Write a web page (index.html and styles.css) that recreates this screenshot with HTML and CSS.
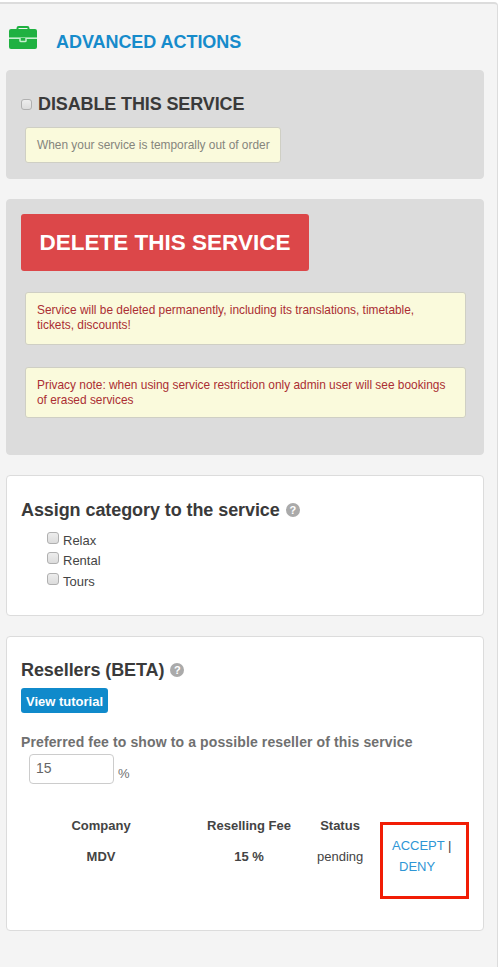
FILE: index.html
```html
<!DOCTYPE html>
<html lang="en">
  <head>
    <meta charset="UTF-8" />
    <meta name="viewport" content="width=device-width, initial-scale=1.0" />
    <title>Service | Advanced Actions</title>
    <link rel="stylesheet" href="styles.css">
  </head>
  <body>
    <div class="panel">
      <!-- Title -->
      <div class="panel-header">
        <svg class="briefcase" width="28" height="24" viewBox="0 0 28 24">
          <path d="M8.5 4V2.2Q8.5 1 9.7 1H18.3Q19.5 1 19.5 2.2V4" fill="none" stroke="#1fb141" stroke-width="2" />
          <rect x="0" y="3" width="28" height="20" rx="2" fill="#1fb141" />
          <path d="M0 12.2H28" stroke="#c5f0cf" stroke-width="1.6" />
          <path d="M11 12V14.7Q11 15.5 12 15.5H16Q17 15.5 17 14.7V12" fill="#1fb141" stroke="#c5f0cf" stroke-width="1.5" />
        </svg>
        <h1>ADVANCED ACTIONS</h1>
      </div>

      <!-- Disable service -->
      <div class="card card-grey disable-card">
        <label class="disable-label">
          <span class="checkbox"></span>
          <span class="disable-text">DISABLE THIS SERVICE</span>
        </label>
        <div class="note note-small">When your service is temporally out of order</div>
      </div>

      <!-- Delete service -->
      <div class="card card-grey delete-card">
        <button class="delete-btn">DELETE THIS SERVICE</button>
        <div class="note note-danger">Service will be deleted permanently, including its translations, timetable,<br>tickets, discounts!</div>
        <div class="note note-danger note-privacy">Privacy note: when using service restriction only admin user will see bookings<br>of erased services</div>
      </div>

      <!-- Categories -->
      <div class="card category-card">
        <h2><span>Assign category to the service</span> <span class="help">?</span></h2>
        <ul class="categories">
          <li><span class="checkbox"></span><span>Relax</span></li>
          <li><span class="checkbox"></span><span>Rental</span></li>
          <li><span class="checkbox"></span><span>Tours</span></li>
        </ul>
      </div>

      <!-- Resellers -->
      <div class="card reseller-card">
        <h2><span>Resellers (BETA)</span> <span class="help">?</span></h2>
        <a href="#" class="tutorial-btn">View tutorial</a>
        <p class="fee-label">Preferred fee to show to a possible reseller of this service</p>
        <div class="fee-row">
          <input type="text" class="fee-input" value="15">
          <span>%</span>
        </div>
        <div class="resellers">
          <div class="col col-company">
            <strong>Company</strong>
            <strong>MDV</strong>
          </div>
          <div class="col col-fee">
            <strong>Reselling Fee</strong>
            <strong>15 %</strong>
          </div>
          <div class="col col-status">
            <strong>Status</strong>
            <span>pending</span>
          </div>
          <div class="actions">
            <div><a href="#">ACCEPT</a> |</div>
            <a href="#" class="deny">DENY</a>
          </div>
        </div>
      </div>
    </div>
  </body>
</html>
```

FILE: styles.css
```css
* {
  box-sizing: border-box;
}

body {
  font-family: "Liberation Sans", Arial, sans-serif;
  font-size: 13px;
  margin: 0;
  padding: 2px 0 0;
  color: #444;
  background-color: #fff;
}

a {
  color: #2f96d5;
  text-decoration: none;
}

.panel {
  width: 498px;
  height: 965px;
  padding: 0 12px 0 6px;
  background-color: #f4f4f4;
  border-top: 2px solid #dcdcdc;
  border-right: 1px solid #dcdcdc;
  border-top-right-radius: 4px;
}

/* Title */
.panel-header {
  display: flex;
  align-items: flex-start;
  height: 66px;
  padding: 22px 0 0 3px;
}

.panel-header h1 {
  margin: 5px 0 0 19px;
  font-size: 18px;
  line-height: 22px;
  letter-spacing: -0.05px;
  color: #168bcb;
}

/* Cards */
.card {
  width: 478px;
  padding: 0 14px;
  background-color: #fff;
  border: 1px solid #dcdcdc;
  border-radius: 4px;
}

.card-grey {
  background-color: #dcdcdc;
}

.card h2 {
  display: flex;
  align-items: center;
  margin: 0;
  font-size: 18px;
  line-height: 22px;
  letter-spacing: -0.08px;
  color: #3a3a3a;
}

.disable-card {
  height: 109px;
  padding-top: 22px;
}

.disable-label {
  display: flex;
  align-items: center;
  height: 22px;
  font-size: 18px;
  font-weight: bold;
  letter-spacing: -0.12px;
  color: #3a3a3a;
}

.checkbox {
  flex: none;
  width: 12px;
  height: 12px;
  background: linear-gradient(#ededed, #dcdcdc);
  border: 1px solid #b0b0b0;
  border-radius: 3px;
}

.disable-label .checkbox {
  width: 11px;
  height: 11px;
  margin-right: 6px;
}

.note {
  width: 441px;
  height: 53px;
  margin-left: 4px;
  padding: 10px 11px;
  font-size: 11.9px;
  line-height: 15px;
  white-space: nowrap;
  background-color: #fafadc;
  border: 1px solid #cfcfc4;
  border-radius: 3px;
}

.note-small {
  width: 256px;
  height: 36px;
  margin-top: 12px;
  color: #85857c;
}

.note-danger {
  color: #ab2e33;
}

/* Delete service */
.delete-card {
  height: 256px;
  margin-top: 20px;
  padding-top: 14px;
}

.delete-btn {
  display: block;
  width: 288px;
  height: 57px;
  margin-bottom: 21px;
  padding: 0;
  font-family: inherit;
  font-size: 22.5px;
  font-weight: bold;
  color: #fff;
  background-color: #dc4749;
  border: none;
  border-radius: 3px;
}

.note-privacy {
  height: 51px;
  margin-top: 22px;
}

/* Categories */
.category-card {
  height: 141px;
  margin-top: 20px;
  padding-top: 23px;
}

.help {
  width: 14px;
  height: 14px;
  margin-left: 6px;
  font-size: 11px;
  line-height: 14px;
  text-align: center;
  color: #fff;
  background-color: #aaa;
  border-radius: 50%;
}

.categories {
  margin: 9px 0 0 26px;
  padding: 0;
  list-style: none;
}

.categories li {
  display: flex;
  height: 20.4px;
  line-height: 21px;
}

.categories .checkbox {
  margin: 2px 4px 0 0;
}

/* Resellers */
.reseller-card {
  height: 295px;
  margin-top: 20px;
  padding-top: 22px;
}

.tutorial-btn {
  display: block;
  width: 87px;
  height: 25px;
  margin-top: 7px;
  font-weight: bold;
  line-height: 27px;
  text-align: center;
  color: #fff;
  background-color: #108acb;
  border-radius: 3px;
}

.fee-label {
  margin: 20px 0 0;
  font-size: 14px;
  font-weight: bold;
  line-height: 18px;
  letter-spacing: 0.12px;
  color: #707070;
}

.fee-row {
  display: flex;
  align-items: flex-end;
  gap: 4px;
  margin: 3px 0 0 8px;
  color: #707070;
}

.fee-row span {
  line-height: 20px;
}

.fee-input {
  width: 85px;
  height: 30px;
  padding: 0 6px 2px;
  font-family: inherit;
  font-size: 14px;
  color: #666;
  border: 1px solid #ccc;
  border-radius: 4px;
}

.resellers {
  display: flex;
  align-items: flex-start;
  margin-top: 32px;
}

.col {
  display: flex;
  flex-direction: column;
  gap: 11px;
  line-height: 20px;
  text-align: center;
}

.col-company {
  width: 160px;
}

.col-fee {
  width: 136px;
}

.col-status {
  width: 46px;
}

.actions {
  width: 89px;
  height: 77px;
  margin: 6px 0 0 17px;
  padding: 11px 0 0 9px;
  line-height: 20.5px;
  border: 3px solid #f11d05;
}

.deny {
  margin-left: 7px;
}
```
